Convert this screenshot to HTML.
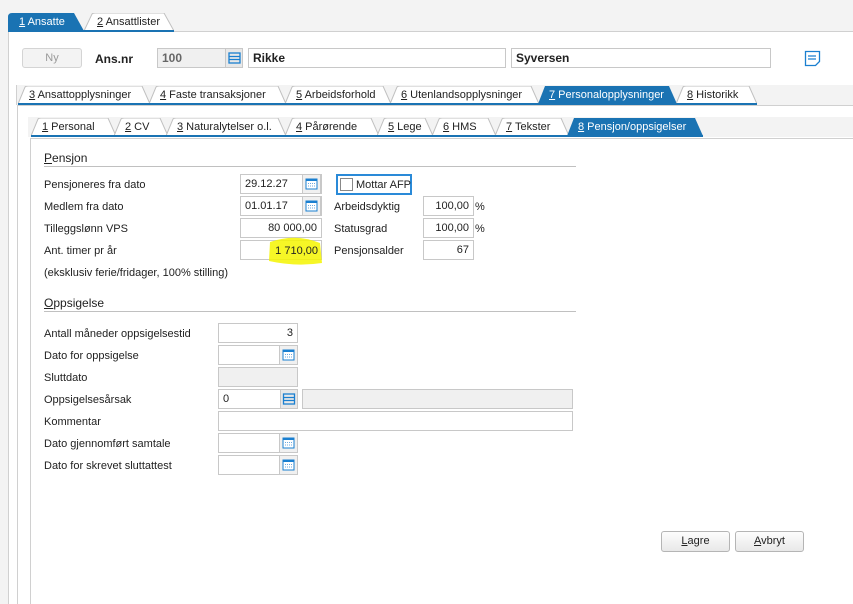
<!DOCTYPE html>
<html><head><meta charset="utf-8"><style>
*{box-sizing:border-box;margin:0;padding:0}
body{width:853px;height:604px;background:#f3f3f3;font-family:"Liberation Sans",Arial,sans-serif;font-size:11px;color:#222;position:relative;overflow:hidden}
.a{position:absolute}
.tab{position:absolute;height:18px;line-height:18px;font-size:11px;color:#222;padding-left:11px;white-space:nowrap}
.tab svg{position:absolute;left:0;top:0}
.tab span{position:relative}
.tab.on{color:#fff}
u{text-decoration:underline}
.in{position:absolute;height:20px;border:1px solid #c8c8c8;background:#fff;line-height:18px;padding:0 4px;font-size:11px}
.r{text-align:right}
.lbl{position:absolute;font-size:11px;line-height:14px;white-space:nowrap}
.cal{position:absolute;width:19px;height:20px;border:1px solid #c8c8c8;background:#f0f0f0}
.btn{position:absolute;height:21px;border:1px solid #b5b5b5;border-radius:3px;background:linear-gradient(#fdfdfd,#e8e8e8);text-align:center;line-height:19px;font-size:11px}
</style></head><body>
<div class="a" style="left:8px;top:31px;width:845px;height:573px;background:#fff;border-left:1px solid #d0d0d0;border-top:1px solid #d0d0d0"></div>
<div class="tab on" style="left:8px;top:13px;width:76px"><svg width="76" height="18"><path d="M0 18 L0 4 Q0 0 4 0 L66 0 L76 18Z" fill="#1a73b3"/></svg><span><u>1</u> Ansatte</span></div>
<div class="tab" style="left:84px;top:13px;width:90px"><svg width="90" height="18"><path d="M0 18 L8 1 Q9 0 11 0 L80 0 L90 18" fill="#fff" stroke="#c0c0c0"/></svg><span style="left:2px"><u>2</u> Ansattlister</span></div>
<div class="a" style="left:8px;top:30px;width:166px;height:2px;background:#1a73b3"></div>

<div class="btn" style="left:22px;top:48px;width:60px;height:20px;color:#999;border-color:#d4d4d4;background:#f3f3f3">Ny</div>
<div class="lbl" style="left:95px;top:52px;font-weight:bold;font-size:12px">Ans.nr</div>
<div class="in" style="left:157px;top:48px;width:86px;background:#f0f0f0;font-weight:bold;color:#666;font-size:12px">100</div>
<div class="a" style="left:225px;top:49px;width:17px;height:18px;background:#e8e8e8;border-left:1px solid #c8c8c8"><svg width="17" height="18"><rect x="3" y="4" width="11" height="10" fill="none" stroke="#1a7fd0" stroke-width="1.3"/><path d="M3 7.5h11M3 10.5h11" stroke="#1a7fd0" stroke-width="1.3"/></svg></div>
<div class="in" style="left:248px;top:48px;width:258px;font-weight:bold;font-size:12px">Rikke</div>
<div class="in" style="left:511px;top:48px;width:260px;font-weight:bold;font-size:12px">Syversen</div>
<svg class="a" style="left:804px;top:50px" width="18" height="18"><path d="M1.5 1.5h14v10l-4 4h-10z" fill="#fff" stroke="#1a7fd0" stroke-width="1.3"/><path d="M4 6h8M4 9h8" stroke="#1a7fd0" stroke-width="1.3"/></svg>

<div class="a" style="left:16px;top:85px;width:837px;height:20px;background:#f3f3f3;border-left:1px solid #d0d0d0"></div>
<div class="a" style="left:17px;top:105px;width:836px;height:499px;background:#fff;border-left:1px solid #d0d0d0;border-top:1px solid #d0d0d0"></div>
<div class="tab" style="left:18px;top:86px;width:132px"><svg width="132" height="18"><path d="M0 18 L7 1 Q8 0 10 0 L124 0 L132 18" fill="#fff" stroke="#c0c0c0"/></svg><span><u>3</u> Ansattopplysninger</span></div>
<div class="tab" style="left:149px;top:86px;width:137px"><svg width="137" height="18"><path d="M0 18 L7 1 Q8 0 10 0 L129 0 L137 18" fill="#fff" stroke="#c0c0c0"/></svg><span><u>4</u> Faste transaksjoner</span></div>
<div class="tab" style="left:285px;top:86px;width:106px"><svg width="106" height="18"><path d="M0 18 L7 1 Q8 0 10 0 L98 0 L106 18" fill="#fff" stroke="#c0c0c0"/></svg><span><u>5</u> Arbeidsforhold</span></div>
<div class="tab" style="left:390px;top:86px;width:149px"><svg width="149" height="18"><path d="M0 18 L7 1 Q8 0 10 0 L141 0 L149 18" fill="#fff" stroke="#c0c0c0"/></svg><span><u>6</u> Utenlandsopplysninger</span></div>
<div class="tab on" style="left:538px;top:86px;width:139px"><svg width="139" height="18"><path d="M0 18 L7 0 L131 0 L139 18Z" fill="#1a73b3"/></svg><span><u>7</u> Personalopplysninger</span></div>
<div class="tab" style="left:676px;top:86px;width:81px"><svg width="81" height="18"><path d="M0 18 L7 1 Q8 0 10 0 L73 0 L81 18" fill="#fff" stroke="#c0c0c0"/></svg><span><u>8</u> Historikk</span></div>
<div class="a" style="left:18px;top:103px;width:739px;height:2px;background:#1a73b3"></div>

<div class="a" style="left:28px;top:117px;width:825px;height:20px;background:#f3f3f3"></div>
<div class="a" style="left:30px;top:138px;width:823px;height:466px;background:#fff;border-left:1px solid #d0d0d0;border-top:1px solid #d0d0d0"></div>
<div class="tab" style="left:31px;top:118px;width:85px"><svg width="85" height="18"><path d="M0 18 L7 1 Q8 0 10 0 L77 0 L85 18" fill="#fff" stroke="#c0c0c0"/></svg><span><u>1</u> Personal</span></div>
<div class="tab" style="left:114px;top:118px;width:54px"><svg width="54" height="18"><path d="M0 18 L7 1 Q8 0 10 0 L46 0 L54 18" fill="#fff" stroke="#c0c0c0"/></svg><span><u>2</u> CV</span></div>
<div class="tab" style="left:166px;top:118px;width:120px"><svg width="120" height="18"><path d="M0 18 L7 1 Q8 0 10 0 L112 0 L120 18" fill="#fff" stroke="#c0c0c0"/></svg><span><u>3</u> Naturalytelser o.l.</span></div>
<div class="tab" style="left:285px;top:118px;width:94px"><svg width="94" height="18"><path d="M0 18 L7 1 Q8 0 10 0 L86 0 L94 18" fill="#fff" stroke="#c0c0c0"/></svg><span><u>4</u> Pårørende</span></div>
<div class="tab" style="left:377px;top:118px;width:56px"><svg width="56" height="18"><path d="M0 18 L7 1 Q8 0 10 0 L48 0 L56 18" fill="#fff" stroke="#c0c0c0"/></svg><span><u>5</u> Lege</span></div>
<div class="tab" style="left:432px;top:118px;width:64px"><svg width="64" height="18"><path d="M0 18 L7 1 Q8 0 10 0 L56 0 L64 18" fill="#fff" stroke="#c0c0c0"/></svg><span><u>6</u> HMS</span></div>
<div class="tab" style="left:495px;top:118px;width:74px"><svg width="74" height="18"><path d="M0 18 L7 1 Q8 0 10 0 L66 0 L74 18" fill="#fff" stroke="#c0c0c0"/></svg><span><u>7</u> Tekster</span></div>
<div class="tab on" style="left:567px;top:118px;width:136px"><svg width="136" height="18"><path d="M0 18 L7 0 L128 0 L136 18Z" fill="#1a73b3"/></svg><span><u>8</u> Pensjon/oppsigelser</span></div>
<div class="a" style="left:31px;top:135px;width:672px;height:2px;background:#1a73b3"></div>

<div class="lbl" style="left:44px;top:151px;font-size:12px"><u>P</u>ensjon</div>
<div class="a" style="left:44px;top:166px;width:532px;height:1px;background:#c0c0c0"></div>
<div class="lbl" style="left:44px;top:178px">Pensjoneres fra dato</div>
<div class="lbl" style="left:44px;top:200px">Medlem fra dato</div>
<div class="lbl" style="left:44px;top:222px">Tilleggslønn VPS</div>
<div class="lbl" style="left:44px;top:244px">Ant. timer pr år</div>
<div class="lbl" style="left:44px;top:266px">(eksklusiv ferie/fridager, 100% stilling)</div>
<div class="in" style="left:240px;top:174px;width:82px">29.12.27</div>
<div class="in" style="left:240px;top:196px;width:82px">01.01.17</div>
<div class="in r" style="left:240px;top:218px;width:82px">80 000,00</div>
<div class="in r" style="left:240px;top:240px;width:82px"></div>
<svg class="a" style="left:266px;top:235px" width="60" height="32"><path d="M4 7 Q30 -2 54 8 L56 28 Q30 32 3 26Z" fill="#f5f500" opacity=".85"/></svg>
<div class="lbl" style="left:271px;top:244px;width:47px;text-align:right">1 710,00</div>
<div class="cal" style="left:302px;top:174px"></div><div class="cal" style="left:302px;top:196px"></div>
<div class="cal" style="left:279px;top:345px"></div><div class="cal" style="left:279px;top:433px"></div><div class="cal" style="left:279px;top:455px"></div>
<svg class="a" style="left:304px;top:177px" width="15" height="14"><rect x="2" y="2" width="11" height="10" fill="#fff" stroke="#1a7fd0"/><rect x="2" y="2" width="11" height="2" fill="#1a7fd0"/><path d="M4 6.5h7M4 9h7" stroke="#6aa8e0" stroke-dasharray="1 1"/></svg>
<svg class="a" style="left:304px;top:199px" width="15" height="14"><rect x="2" y="2" width="11" height="10" fill="#fff" stroke="#1a7fd0"/><rect x="2" y="2" width="11" height="2" fill="#1a7fd0"/><path d="M4 6.5h7M4 9h7" stroke="#6aa8e0" stroke-dasharray="1 1"/></svg>
<svg class="a" style="left:281px;top:348px" width="15" height="14"><rect x="2" y="2" width="11" height="10" fill="#fff" stroke="#1a7fd0"/><rect x="2" y="2" width="11" height="2" fill="#1a7fd0"/><path d="M4 6.5h7M4 9h7" stroke="#6aa8e0" stroke-dasharray="1 1"/></svg>
<svg class="a" style="left:281px;top:436px" width="15" height="14"><rect x="2" y="2" width="11" height="10" fill="#fff" stroke="#1a7fd0"/><rect x="2" y="2" width="11" height="2" fill="#1a7fd0"/><path d="M4 6.5h7M4 9h7" stroke="#6aa8e0" stroke-dasharray="1 1"/></svg>
<svg class="a" style="left:281px;top:458px" width="15" height="14"><rect x="2" y="2" width="11" height="10" fill="#fff" stroke="#1a7fd0"/><rect x="2" y="2" width="11" height="2" fill="#1a7fd0"/><path d="M4 6.5h7M4 9h7" stroke="#6aa8e0" stroke-dasharray="1 1"/></svg>

<div class="a" style="left:336px;top:174px;width:76px;height:21px;border:2px solid #2a8ad8"></div>
<div class="a" style="left:340px;top:178px;width:13px;height:13px;border:1px solid #888;background:#fff"></div>
<div class="lbl" style="left:356px;top:178px">Mottar AFP</div>
<div class="lbl" style="left:334px;top:200px">Arbeidsdyktig</div>
<div class="lbl" style="left:334px;top:222px">Statusgrad</div>
<div class="lbl" style="left:334px;top:244px">Pensjonsalder</div>
<div class="in r" style="left:423px;top:196px;width:51px">100,00</div>
<div class="in r" style="left:423px;top:218px;width:51px">100,00</div>
<div class="in r" style="left:423px;top:240px;width:51px">67</div>
<div class="lbl" style="left:475px;top:200px">%</div>
<div class="lbl" style="left:475px;top:222px">%</div>

<div class="lbl" style="left:44px;top:296px;font-size:12px"><u>O</u>ppsigelse</div>
<div class="a" style="left:44px;top:311px;width:532px;height:1px;background:#c0c0c0"></div>
<div class="lbl" style="left:44px;top:327px">Antall måneder oppsigelsestid</div>
<div class="lbl" style="left:44px;top:349px">Dato for oppsigelse</div>
<div class="lbl" style="left:44px;top:371px">Sluttdato</div>
<div class="lbl" style="left:44px;top:393px">Oppsigelsesårsak</div>
<div class="lbl" style="left:44px;top:415px">Kommentar</div>
<div class="lbl" style="left:44px;top:437px">Dato gjennomført samtale</div>
<div class="lbl" style="left:44px;top:459px">Dato for skrevet sluttattest</div>
<div class="in r" style="left:218px;top:323px;width:80px">3</div>
<div class="in" style="left:218px;top:345px;width:62px"></div>
<div class="in" style="left:218px;top:367px;width:80px;background:#f0f0f0"></div>
<div class="in" style="left:218px;top:389px;width:63px">0</div>
<div class="a" style="left:280px;top:389px;width:18px;height:20px;background:#e8e8e8;border:1px solid #c8c8c8"><svg width="16" height="18"><rect x="2.5" y="4" width="11" height="10" fill="none" stroke="#1a7fd0" stroke-width="1.3"/><path d="M2.5 7.5h11M2.5 10.5h11" stroke="#1a7fd0" stroke-width="1.3"/></svg></div>
<div class="in" style="left:302px;top:389px;width:271px;background:#f0f0f0"></div>
<div class="in" style="left:218px;top:411px;width:355px"></div>
<div class="in" style="left:218px;top:433px;width:62px"></div>
<div class="in" style="left:218px;top:455px;width:62px"></div>

<div class="btn" style="left:661px;top:531px;width:69px"><u>L</u>agre</div>
<div class="btn" style="left:735px;top:531px;width:69px"><u>A</u>vbryt</div>
</body></html>
